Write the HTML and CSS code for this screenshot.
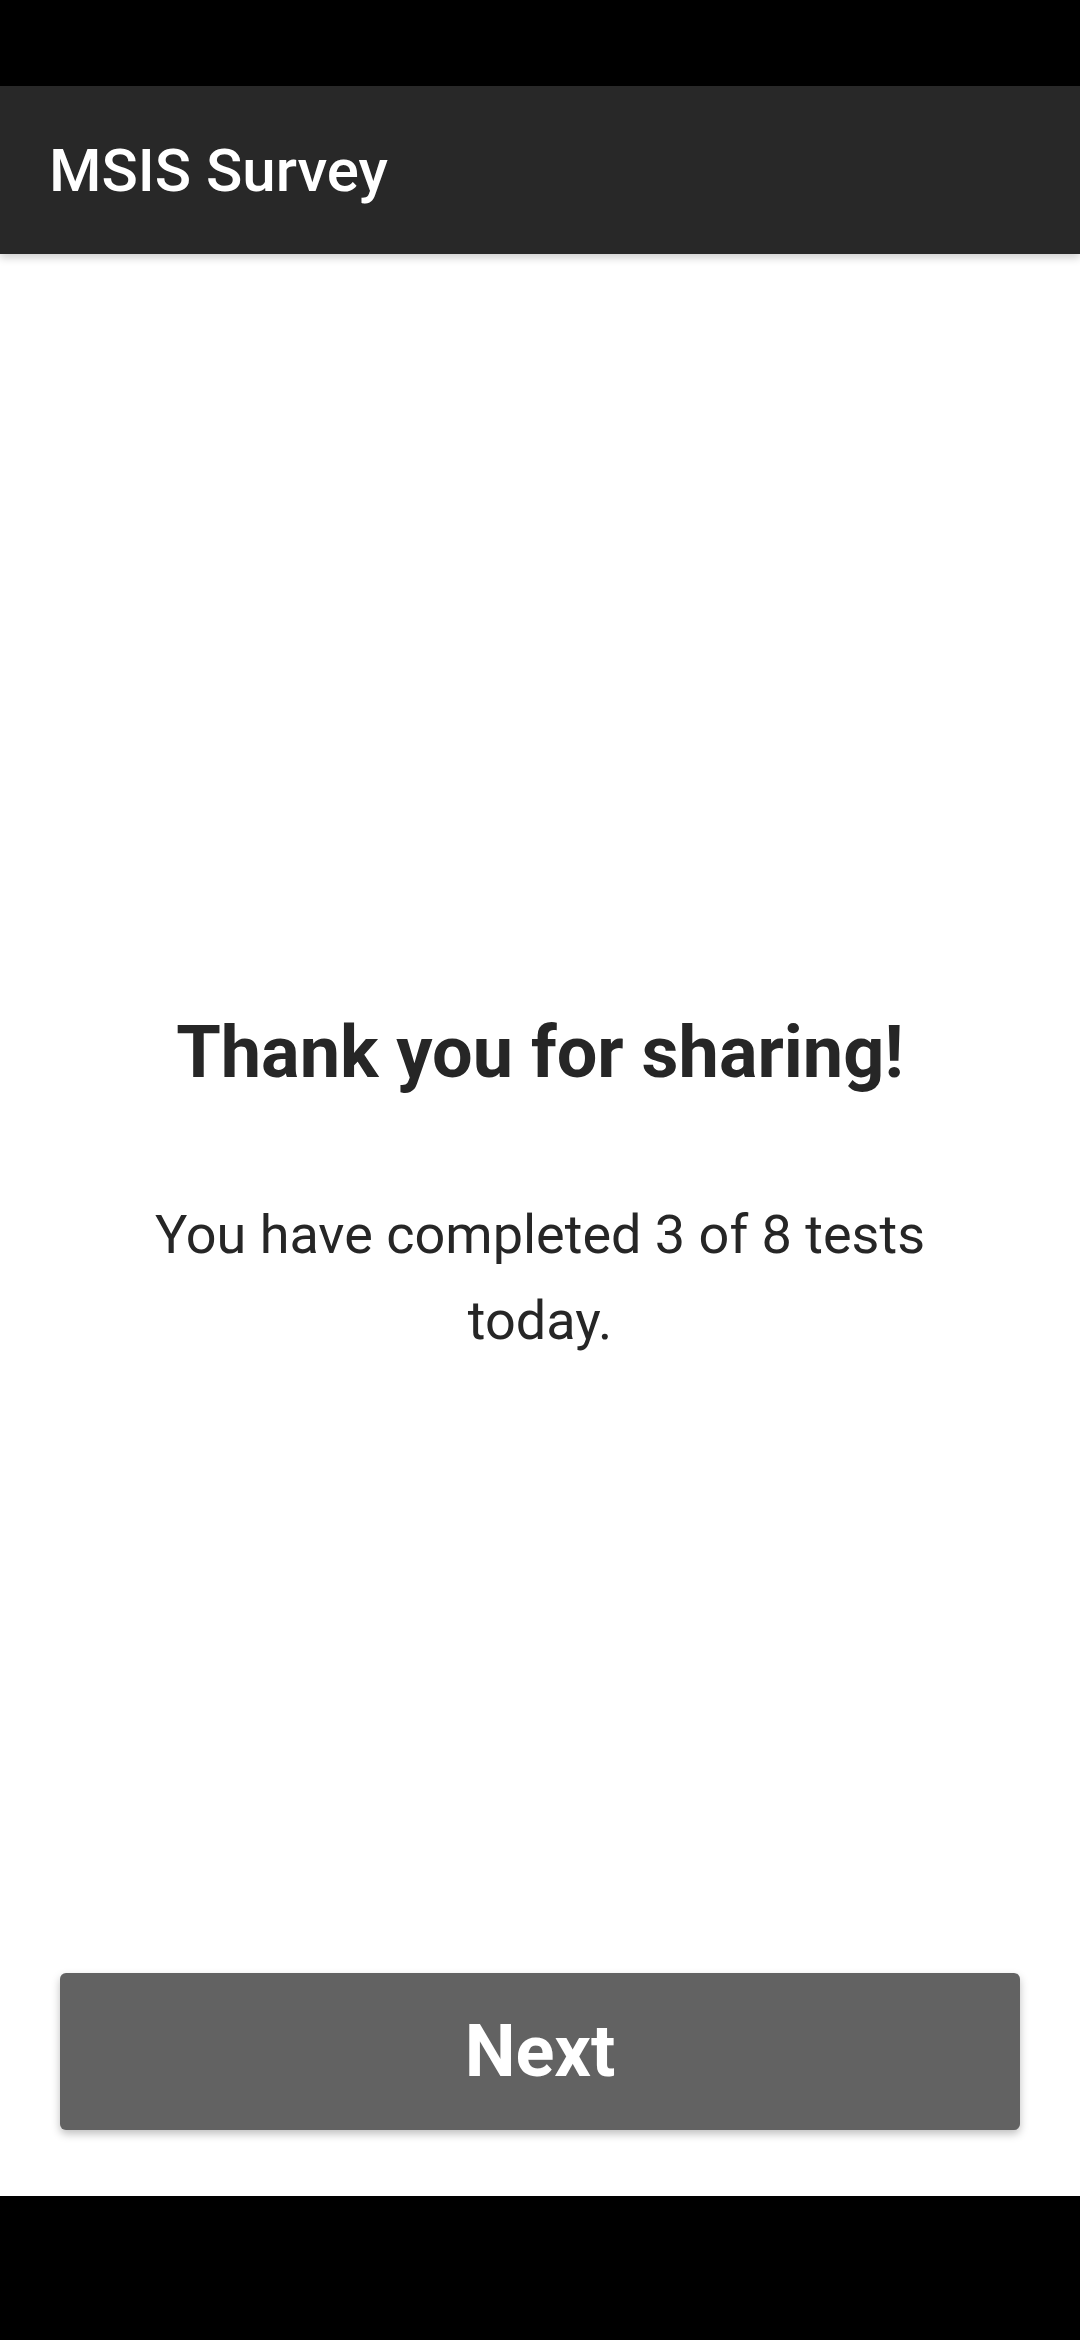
FILE: index.html
```html
<!DOCTYPE html>
<html>
<head>
<meta charset="utf-8">
<link rel="stylesheet" href="styles.css">
</head>
<body>
<div class="screen">
  <div class="status-bar"></div>
  <header class="app-bar"><h1 class="app-title">MSIS Survey</h1></header>
  <main class="content">
    <div class="message">
      <h2 class="heading">Thank you for sharing!</h2>
      <p class="body-text">You have completed 3 of 8 tests today.</p>
    </div>
    <div class="actions">
      <button class="next-btn">Next</button>
    </div>
  </main>
  <div class="nav-bar"></div>
</div>
</body>
</html>
```

FILE: styles.css
```css
* { box-sizing: border-box; }
html, body { margin: 0; padding: 0; }
body { font-family: Roboto, "Noto Sans", sans-serif; background: #000; }
.screen { width: 1080px; height: 2340px; display: flex; flex-direction: column; background: #fff; }
.status-bar { height: 86px; background: #000; flex: none; }
.app-bar { height: 168px; background: #282828; flex: none; display: flex; align-items: center; padding-left: 49px; box-shadow: 0 4px 8px rgba(0,0,0,0.18); position: relative; z-index: 1; }
.app-title { margin: 0; color: #fff; font-weight: 500; font-size: 60px; letter-spacing: 0; }
.content { flex: 1; display: flex; flex-direction: column; background: #fff; }
.message { flex: 1; padding: 753px 120px 0; text-align: center; }
.heading { margin: 0; font-size: 72px; line-height: 92px; font-weight: 700; color: #262626; }
.body-text { margin: 93px 0 0; font-size: 54px; line-height: 86px; font-weight: 400; color: #262626; }
.actions { padding: 0 60px 66px; }
.next-btn { display: block; width: 100%; height: 157px; border: none; border-radius: 6px; background: #626262; color: #fff; font-family: Roboto, sans-serif; font-size: 72px; font-weight: 700; box-shadow: 0 4px 8px rgba(0,0,0,0.25); padding: 0; }
.nav-bar { height: 144px; background: #000; flex: none; }
```
